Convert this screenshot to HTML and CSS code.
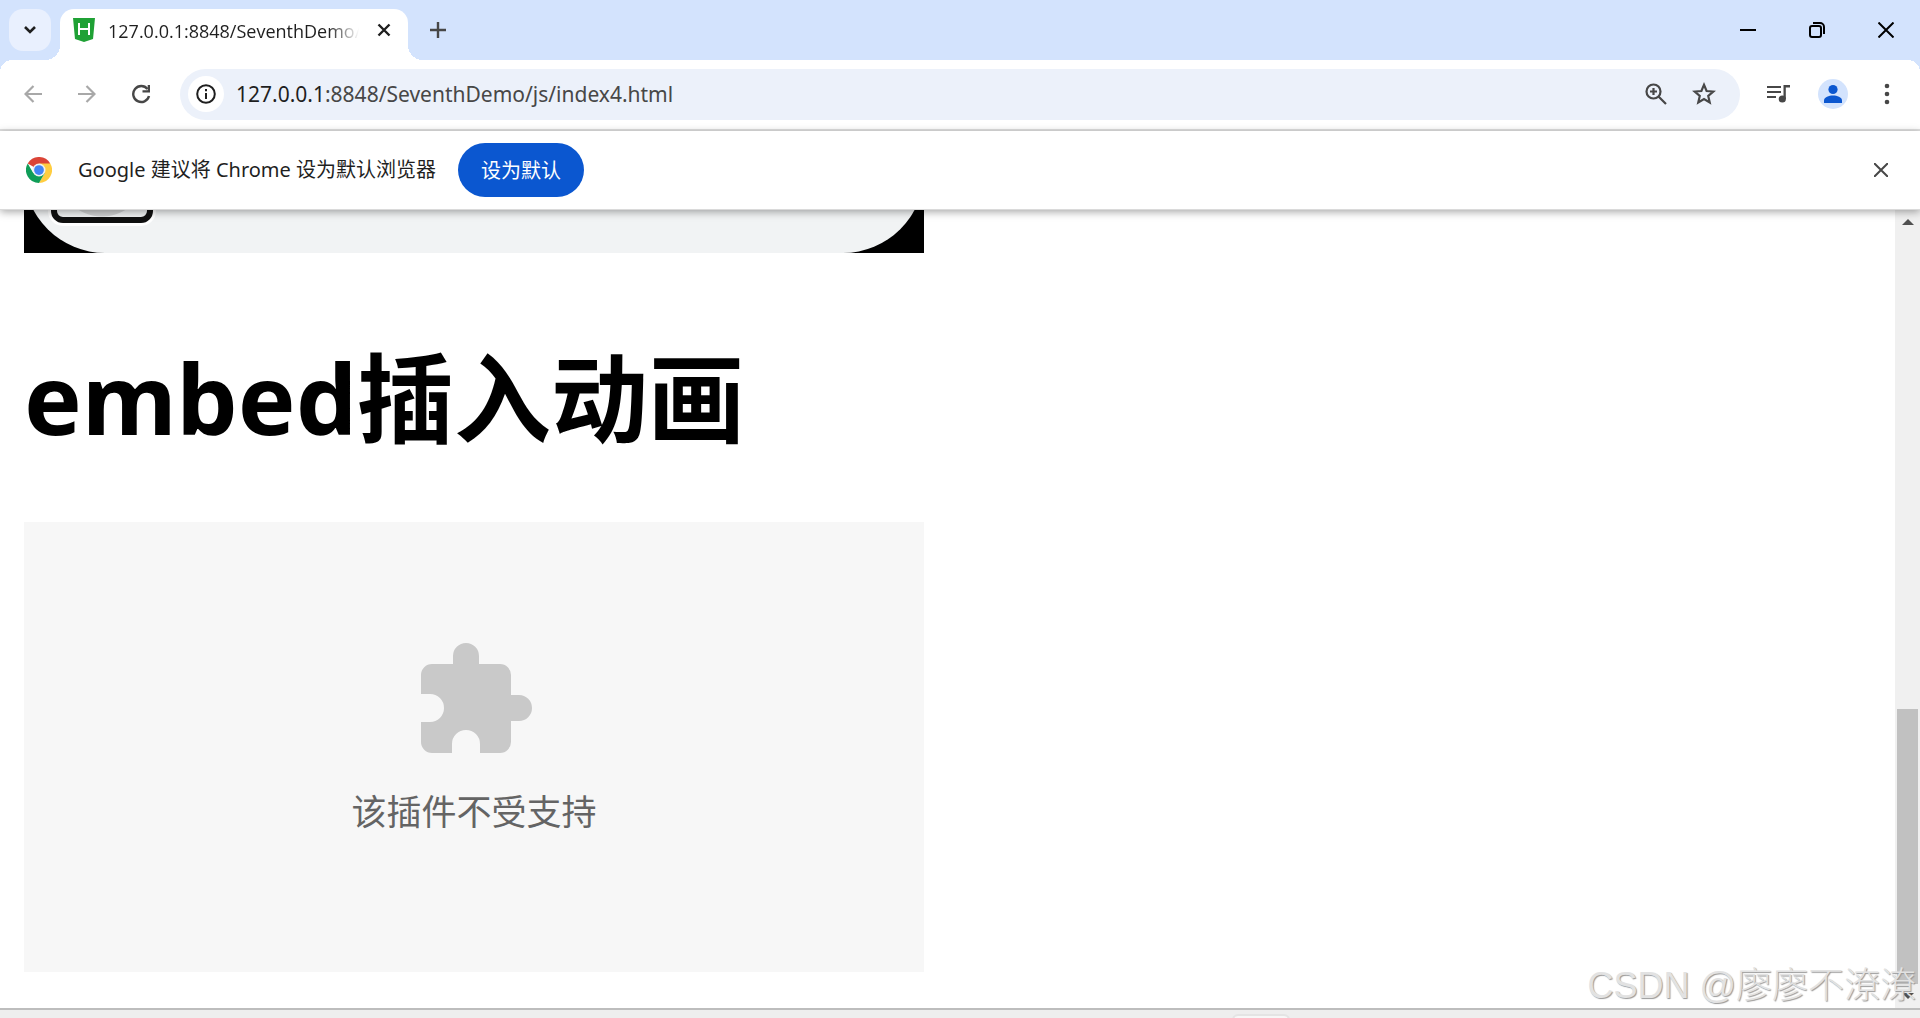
FILE: index.html
```html
<!DOCTYPE html>
<html lang="zh-CN">
<head>
  <meta charset="utf-8">
  <meta name="viewport" content="width=device-width, initial-scale=1.0">
  <title>127.0.0.1:8848/SeventhDemo/js/index4.html</title>
  <link rel="stylesheet" href="styles.css">
</head>
<body>
  <header class="tab-strip">
    <button class="tab-search" aria-label="搜索标签页">
      <svg width="14" height="10" viewBox="0 0 14 10"><path d="M2 2l5 5 5-5" fill="none" stroke="#1f1f1f" stroke-width="2.6"/></svg>
    </button>
    <div class="tab">
      <svg class="favicon" width="22" height="24" viewBox="0 0 22 24">
        <path d="M0 0h22l-2 21-9 3-9-3z" fill="#1fa135"/>
        <path d="M6 5v12M16 5v12M6 11h10" fill="none" stroke="#fff" stroke-width="2"/>
      </svg>
      <span class="tab-title">127.0.0.1:8848/SeventhDemo/js/index4.html</span>
      <button class="tab-close" aria-label="关闭标签页">
        <svg width="14" height="14" viewBox="0 0 14 14"><path d="M1.5 1.5l11 11M12.5 1.5l-11 11" stroke="#1f1f1f" stroke-width="2.4"/></svg>
      </button>
    </div>
    <button class="new-tab" aria-label="新标签页">
      <svg width="16" height="16" viewBox="0 0 16 16"><path d="M8 0v16M0 8h16" stroke="#474747" stroke-width="2.4"/></svg>
    </button>
    <div class="window-buttons">
      <button aria-label="最小化"><svg width="16" height="16" viewBox="0 0 16 16"><path d="M0 8h16" stroke="#000" stroke-width="2"/></svg></button>
      <button aria-label="还原"><svg width="16" height="16" viewBox="0 0 16 16"><rect x="1" y="4" width="11" height="11" rx="2" fill="none" stroke="#000" stroke-width="2"/><path d="M4 1h7a4 4 0 0 1 4 4v7" fill="none" stroke="#000" stroke-width="2"/></svg></button>
      <button aria-label="关闭"><svg width="16" height="16" viewBox="0 0 16 16"><path d="M.5.5l15 15M15.5.5l-15 15" stroke="#000" stroke-width="2"/></svg></button>
    </div>
  </header>

  <nav class="toolbar">
    <button class="nav-button" aria-label="后退"><svg width="18" height="18" viewBox="0 0 18 18"><path d="M18 9H2M9.5 1L1.5 9l8 8" fill="none" stroke="#a8a8a8" stroke-width="2.2"/></svg></button>
    <button class="nav-button" aria-label="前进"><svg width="18" height="18" viewBox="0 0 18 18"><path d="M0 9h16M8.5 1l8 8-8 8" fill="none" stroke="#a8a8a8" stroke-width="2.2"/></svg></button>
    <button class="nav-button" aria-label="重新加载"><svg width="20" height="20" viewBox="0 0 20 20"><path d="M16.5 5A8 8 0 1 0 18 12" fill="none" stroke="#474747" stroke-width="2.4"/><path d="M19 1v7.5h-7.5V6.3h5.2V1z" fill="#474747"/></svg></button>
    <div class="omnibox">
      <button class="site-info" aria-label="查看网站信息">
        <svg width="20" height="20" viewBox="0 0 20 20"><circle cx="10" cy="10" r="8.8" fill="none" stroke="#1f1f1f" stroke-width="2"/><path d="M10 9v6M10 5v2.2" stroke="#1f1f1f" stroke-width="2"/></svg>
      </button>
      <div class="url" role="textbox" aria-label="地址栏"><b>127.0.0.1</b>:8848/SeventhDemo/js/index4.html</div>
      <button class="omni-button" aria-label="缩放">
        <svg width="22" height="22" viewBox="0 0 22 22"><circle cx="8.5" cy="8.5" r="7" fill="none" stroke="#474747" stroke-width="2.2"/><path d="M8.5 5v7M5 8.5h7M13.5 13.5l7.5 7.5" stroke="#474747" stroke-width="2.2"/></svg>
      </button>
      <button class="omni-button" aria-label="添加书签">
        <svg width="26" height="26" viewBox="0 0 24 24"><path d="M12 3.5l2.4 5.7 6.2.5-4.7 4.1 1.4 6L12 16.6l-5.3 3.2 1.4-6-4.7-4.1 6.2-.5z" fill="none" stroke="#474747" stroke-width="2"/></svg>
      </button>
    </div>
    <button class="tool-button" aria-label="媒体控件">
      <svg width="24" height="18" viewBox="0 0 24 18"><path d="M0 2h14M0 7h14M0 12h9" stroke="#474747" stroke-width="2.2"/><path d="M16.5 0H23v2.4h-4.2V14h-2.3z" fill="#474747"/><circle cx="15.3" cy="14" r="3.6" fill="#474747"/></svg>
    </button>
    <button class="tool-button" aria-label="个人资料">
      <svg width="30" height="30" viewBox="0 0 30 30"><circle cx="15" cy="15" r="15" fill="#d3e3fd"/><circle cx="15" cy="10.5" r="4.6" fill="#0b57d0"/><path d="M6 24v-2.5C6 18 11 16.5 15 16.5s9 1.5 9 5V24z" fill="#0b57d0"/></svg>
    </button>
    <button class="tool-button" aria-label="更多">
      <svg width="6" height="22" viewBox="0 0 6 22"><g fill="#474747"><circle cx="3" cy="3" r="2.3"/><circle cx="3" cy="11" r="2.3"/><circle cx="3" cy="19" r="2.3"/></g></svg>
    </button>
  </nav>

  <div class="infobar">
    <svg width="26" height="26" viewBox="0 0 48 48">
      <path d="M24 24L3.2 12A24 24 0 0 1 44.8 12z" fill="#db4437"/>
      <path d="M24 12h20.8A24 24 0 0 1 24 48l10.4-18z" fill="#ffcd40"/>
      <path d="M3.2 12A24 24 0 0 0 24 48l10.4-18L24 24l-10.4 6z" fill="#0f9d58"/>
      <circle cx="24" cy="24" r="12" fill="#f1f1f1"/>
      <circle cx="24" cy="24" r="9" fill="#4285f4"/>
    </svg>
    <span class="infobar-text">Google 建议将 Chrome 设为默认浏览器</span>
    <button class="default-button">设为默认</button>
    <button class="infobar-close" aria-label="关闭">
      <svg width="14" height="14" viewBox="0 0 14 14"><path d="M0 0l14 14M14 0L0 14" stroke="#474747" stroke-width="2"/></svg>
    </button>
  </div>

  <div class="viewport">
    <main class="page">
      <div class="player">
        <div class="player-panel">
          <div class="play-focus"></div>
        </div>
      </div>
      <h1>embed插入动画</h1>
      <div class="plugin">
        <svg width="116" height="112" viewBox="0 0 116 112">
          <path d="M16 22h21V14a13 13 0 0 1 26 0v8h21a11 11 0 0 1 11 11v20h8a13 13 0 0 1 0 26h-8v21a11 11 0 0 1-11 11H64v-9a14 14 0 0 0-28 0v9H16a11 11 0 0 1-11-11V80h9a14 14 0 0 0 0-28H5V33a11 11 0 0 1 11-11z" fill="#c9c9c9"/>
        </svg>
        <p>该插件不受支持</p>
      </div>
    </main>
    <div class="scrollbar">
      <svg width="12" height="6" viewBox="0 0 12 6"><path d="M0 6l6-6 6 6z" fill="#505050"/></svg>
      <div class="scroll-thumb"></div>
      <svg width="12" height="6" viewBox="0 0 12 6"><path d="M0 0l6 6 6-6z" fill="#505050"/></svg>
    </div>
    <div class="watermark">CSDN @廖廖不潦潦</div>
  </div>

  <footer class="bottom-strip"><div class="strip-tab"></div></footer>
</body>
</html>
```
FILE: styles.css
```css
* {
  box-sizing: border-box;
}
body {
  margin: 0;
  height: 100vh;
  display: flex;
  flex-direction: column;
  overflow: hidden;
  background: #fff;
  color: #1f1f1f;
  font-family: "Noto Sans", "Noto Sans CJK SC", sans-serif;
}
button {
  display: flex;
  align-items: center;
  justify-content: center;
  padding: 0;
  border: 0;
  background: none;
  font-family: inherit;
}
svg {
  display: block;
  flex: none;
}

/* tab strip */
.tab-strip {
  display: flex;
  height: 60px;
  flex: none;
  padding-left: 9px;
  background: #d3e3fd;
}
.tab-search {
  width: 42px;
  height: 42px;
  margin-top: 9px;
  border-radius: 14px;
  background: #e9f0fe;
}
.tab {
  position: relative;
  display: flex;
  align-items: center;
  width: 348px;
  margin: 9px 0 0 9px;
  padding: 0 17px 9px 13px;
  border-radius: 14px 14px 0 0;
  background: #fff;
}
.tab::before,
.tab::after {
  content: "";
  position: absolute;
  bottom: 0;
  width: 15px;
  height: 15px;
}
.tab::before {
  right: 100%;
  background: radial-gradient(circle at 0 0, transparent 15px, #fff 15px);
}
.tab::after {
  left: 100%;
  background: radial-gradient(circle at 100% 0, transparent 15px, #fff 15px);
}
.tab-title {
  flex: 1;
  margin: 0 18px 0 13px;
  padding-top: 2px;
  overflow: hidden;
  white-space: nowrap;
  font-family: "Open Sans", "Noto Sans", sans-serif;
  font-size: 18px;
  mask-image: linear-gradient(to right, #000 88%, transparent);
}
.new-tab {
  width: 60px;
}
.window-buttons {
  display: flex;
  margin-left: auto;
}
.window-buttons button {
  width: 69px;
}
.new-tab,
.window-buttons button {
  height: 60px;
}

/* toolbar */
.toolbar {
  display: flex;
  align-items: center;
  height: 71px;
  flex: none;
  padding: 0 12px 1px 6px;
  border-bottom: 2px solid #e0e0e0;
  background:
    radial-gradient(circle at 12px 12px, #fff 12px, #d3e3fd 12px) 0 0 / 12px 12px no-repeat,
    radial-gradient(circle at 0 12px, #fff 12px, #d3e3fd 12px) 100% 0 / 12px 12px no-repeat,
    #fff;
}
.nav-button {
  width: 54px;
  height: 50px;
}
.omnibox {
  display: flex;
  align-items: center;
  flex: 1;
  height: 51px;
  margin: 0 12px;
  padding: 0 12px 0 8px;
  border-radius: 26px;
  background: #ecf1fa;
}
.site-info {
  width: 36px;
  height: 36px;
  border-radius: 50%;
  background: #fff;
}
.url {
  flex: 1;
  margin-left: 12px;
  font-size: 21px;
  color: #474747;
}
.url b {
  font-weight: normal;
  color: #1f1f1f;
}
.omni-button {
  width: 48px;
  height: 48px;
}
.tool-button {
  width: 54px;
  height: 48px;
}
.tool-button:last-child {
  width: 42px;
  margin-left: 6px;
}

/* default browser prompt */
.infobar {
  position: relative;
  z-index: 1;
  display: flex;
  align-items: center;
  height: 79px;
  flex: none;
  padding: 0 24px 0 26px;
  border-bottom: 1px solid #dadada;
  background: #fff;
  box-shadow: 0 2px 8px rgba(0, 0, 0, 0.35);
}
.infobar-text {
  margin-left: 26px;
  padding-bottom: 4px;
  font-size: 20px;
}
.default-button {
  width: 126px;
  height: 54px;
  margin-left: 22px;
  padding-bottom: 2px;
  border-radius: 27px;
  background: #0b57d0;
  color: #fff;
  font-size: 20px;
}
.infobar-close {
  width: 30px;
  height: 30px;
  margin-left: auto;
}

/* page content */
.viewport {
  position: relative;
  display: flex;
  flex: 1;
  min-height: 0;
}
.page {
  flex: 1;
  padding: 0 24px;
}
.player {
  width: 900px;
  height: 43px;
  overflow: hidden;
  display: flex;
  align-items: flex-end;
  background: #000;
}
.player-panel {
  flex: 1;
  height: 162px;
  padding: 30px 27px;
  border-radius: 81px;
  background: #f1f3f4;
}
.play-focus {
  width: 102px;
  height: 102px;
  border: 6px solid #101010;
  border-radius: 12px;
  background: radial-gradient(circle, #d2d3d4 44px, #f1f3f4 45px);
  box-shadow: 0 0 0 3px #fff;
}
h1 {
  margin: 80px 0 61px;
  color: #000;
  font-size: 97px;
  line-height: 128px;
}
.plugin {
  display: flex;
  flex-direction: column;
  align-items: center;
  width: 900px;
  height: 450px;
  padding-top: 120px;
  background: #f7f7f7;
  color: #646464;
}
.plugin p {
  margin: 33px 0 0;
  font-size: 35px;
  line-height: 50px;
}
.scrollbar {
  display: flex;
  flex-direction: column;
  align-items: center;
  width: 25px;
  padding: 9px 0;
  background: #f0f0f0;
}
.scroll-thumb {
  width: 21px;
  height: 275px;
  margin: auto 0 9px;
  background: #c1c1c1;
}
.watermark {
  position: absolute;
  right: 4px;
  bottom: 0;
  color: #e2e2e2;
  font-family: "Liberation Sans", "Noto Sans CJK SC", sans-serif;
  font-size: 36px;
  font-weight: 300;
  line-height: 44px;
  text-shadow: 1px 1px 1px #999;
}

.bottom-strip {
  display: flex;
  justify-content: center;
  height: 10px;
  flex: none;
  padding-left: 602px;
  border-top: 2px solid #bdbdbd;
  background: #eee;
  overflow: hidden;
}
.strip-tab {
  width: 58px;
  height: 20px;
  margin-top: 4px;
  border: 2px solid #e4e4e4;
  border-radius: 6px;
  background: #f7f7f7;
}
```
